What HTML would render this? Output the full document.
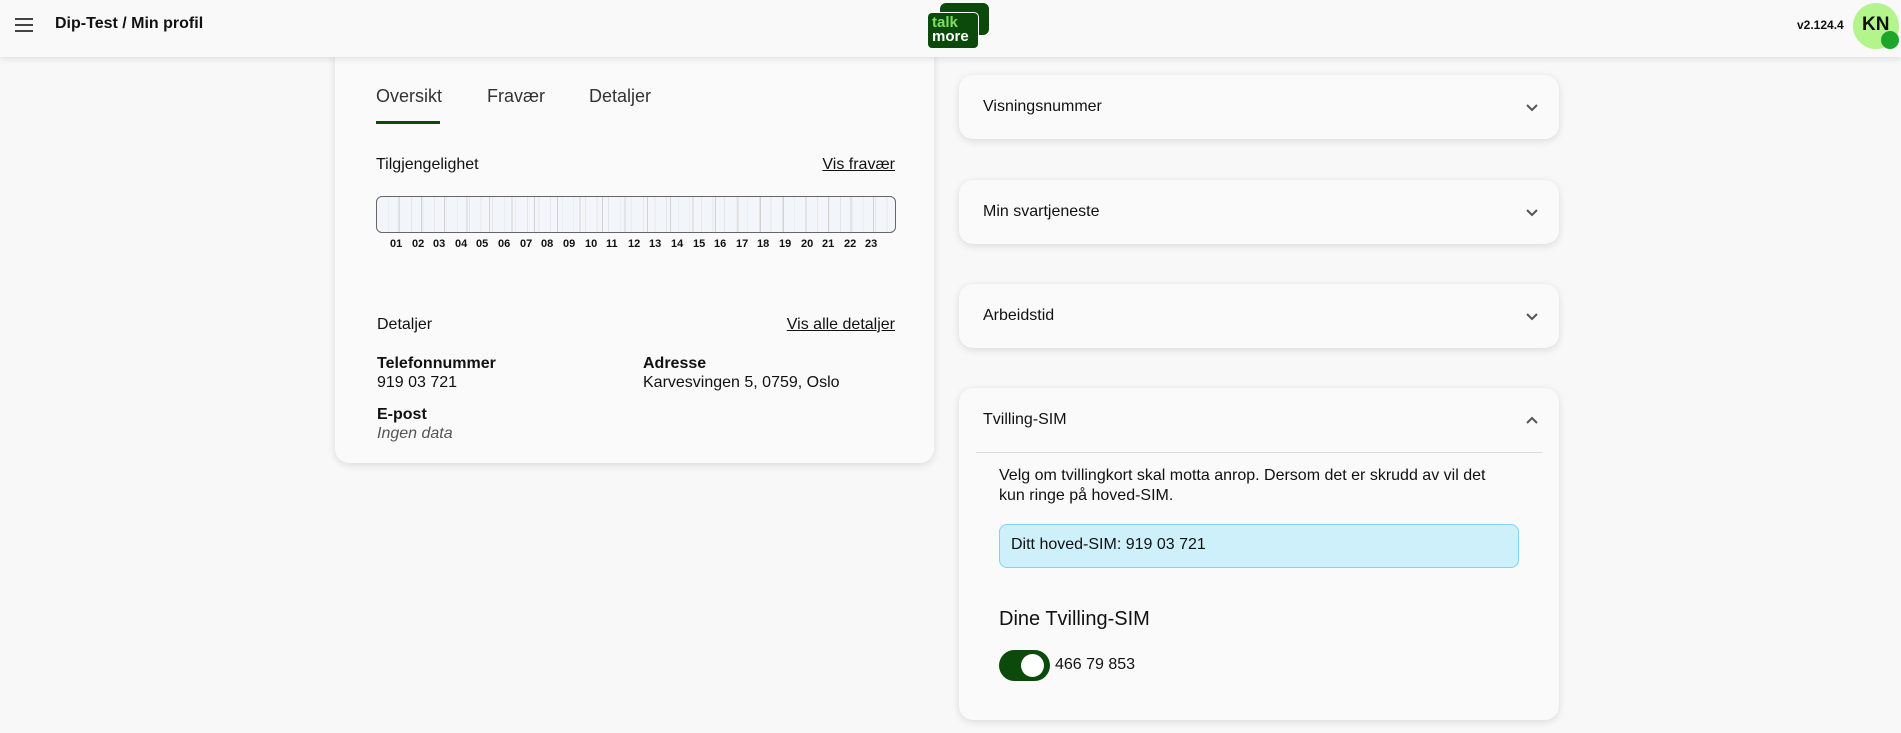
<!DOCTYPE html>
<html><head><meta charset="utf-8"><style>
*{box-sizing:border-box;margin:0;padding:0}
body{width:1901px;height:733px;background:#f8f8f8;font-family:"Liberation Sans",sans-serif;color:#111;position:relative;overflow:hidden}
.hdr{position:absolute;left:0;top:0;width:1901px;height:57px;background:#f9f9f9;box-shadow:0 2px 6px rgba(0,0,0,.1);z-index:2}
.abs{position:absolute}
.card{position:absolute;background:#fafafa;border-radius:14px;box-shadow:0 2px 8px rgba(0,0,0,.12)}
.t{font-size:16px;white-space:nowrap}
.b{font-weight:bold}
.chev{position:absolute;width:14px;height:9px}
</style></head><body>
<div class="hdr">
  <svg class="abs" style="left:14px;top:17px" width="20" height="16" viewBox="0 0 20 16"><path d="M1 2h18M1 8h18M1 14h18" stroke="#444" stroke-width="2"/></svg>
  <div class="abs t b" style="left:55px;top:15px;font-size:16px">Dip-Test / Min profil</div>
  <div class="abs" style="left:940px;top:3px;width:49px;height:32px;background:#0b4a0b;border-radius:6px"></div>
  <div class="abs" style="left:927px;top:12px;width:52px;height:37px;background:#0b4a0b;border-radius:5px;border:1px solid #f9f9f9"></div>
  <div class="abs b" style="left:932px;top:16px;font-size:15px;line-height:14px;color:#7ee05a">talk</div>
  <div class="abs b" style="left:932px;top:30px;font-size:15px;line-height:14px;color:#fff">more</div>
  <div class="abs b" style="left:1797px;top:18px;font-size:12px">v2.124.4</div>
  <div class="abs" style="left:1853px;top:3px;width:46px;height:46px;border-radius:50%;background:#b3f58c"></div>
  <div class="abs b" style="left:1862px;top:14px;font-size:19px">KN</div>
  <div class="abs" style="left:1881px;top:31px;width:18px;height:18px;border-radius:50%;background:#1ea52a"></div>
</div>

<div class="card" style="left:335px;top:40px;width:599px;height:423px;border-radius:0 0 14px 14px">
  <div class="abs" style="left:41px;top:46px;font-size:18px;color:#333">Oversikt</div>
  <div class="abs" style="left:152px;top:46px;font-size:18px;color:#333">Fravær</div>
  <div class="abs" style="left:254px;top:46px;font-size:18px;color:#333">Detaljer</div>
  <div class="abs" style="left:41px;top:81px;width:64px;height:3px;background:#0b4a0b"></div>
  <div class="abs t" style="left:41px;top:116px">Tilgjengelighet</div>
  <div class="abs t" style="right:39px;top:116px;text-decoration:underline">Vis fravær</div>
  <div class="abs" style="left:41px;top:156px;width:520px;height:37px;border:1px solid #666;border-radius:6px;background:#f2f6fa;overflow:hidden;
    background-image:repeating-linear-gradient(90deg,transparent 0 21.6px,#d2d2d2 21.6px 22.6px),repeating-linear-gradient(90deg,transparent 0 10.8px,#e6e6e6 10.8px 11.6px)"></div>
  <div class="abs b" style="left:41px;top:198px;width:520px;height:14px;font-size:11px">
    <span class="abs" style="left:14px">01</span><span class="abs" style="left:36px">02</span><span class="abs" style="left:57px">03</span><span class="abs" style="left:79px">04</span><span class="abs" style="left:100px">05</span><span class="abs" style="left:122px">06</span><span class="abs" style="left:144px">07</span><span class="abs" style="left:165px">08</span><span class="abs" style="left:187px">09</span><span class="abs" style="left:209px">10</span><span class="abs" style="left:230px">11</span><span class="abs" style="left:252px">12</span><span class="abs" style="left:273px">13</span><span class="abs" style="left:295px">14</span><span class="abs" style="left:317px">15</span><span class="abs" style="left:338px">16</span><span class="abs" style="left:360px">17</span><span class="abs" style="left:381px">18</span><span class="abs" style="left:403px">19</span><span class="abs" style="left:425px">20</span><span class="abs" style="left:446px">21</span><span class="abs" style="left:468px">22</span><span class="abs" style="left:489px">23</span>
  </div>
  <div class="abs t" style="left:42px;top:276px">Detaljer</div>
  <div class="abs t" style="right:39px;top:276px;text-decoration:underline">Vis alle detaljer</div>
  <div class="abs t b" style="left:42px;top:315px">Telefonnummer</div>
  <div class="abs t" style="left:42px;top:334px">919 03 721</div>
  <div class="abs t b" style="left:308px;top:315px">Adresse</div>
  <div class="abs t" style="left:308px;top:334px">Karvesvingen 5, 0759, Oslo</div>
  <div class="abs t b" style="left:42px;top:366px">E-post</div>
  <div class="abs t" style="left:42px;top:385px;font-style:italic;color:#555">Ingen data</div>
</div>

<div class="card" style="left:959px;top:75px;width:600px;height:64px">
  <div class="abs t" style="left:24px;top:23px">Visningsnummer</div>
  <svg class="chev" style="left:566px;top:28px" viewBox="0 0 14 9"><path d="M2 2l5 5 5-5" fill="none" stroke="#555" stroke-width="2"/></svg>
</div>
<div class="card" style="left:959px;top:180px;width:600px;height:64px">
  <div class="abs t" style="left:24px;top:23px">Min svartjeneste</div>
  <svg class="chev" style="left:566px;top:28px" viewBox="0 0 14 9"><path d="M2 2l5 5 5-5" fill="none" stroke="#555" stroke-width="2"/></svg>
</div>
<div class="card" style="left:959px;top:284px;width:600px;height:64px">
  <div class="abs t" style="left:24px;top:23px">Arbeidstid</div>
  <svg class="chev" style="left:566px;top:28px" viewBox="0 0 14 9"><path d="M2 2l5 5 5-5" fill="none" stroke="#555" stroke-width="2"/></svg>
</div>
<div class="card" style="left:959px;top:388px;width:600px;height:332px">
  <div class="abs t" style="left:24px;top:23px">Tvilling-SIM</div>
  <svg class="chev" style="left:566px;top:28px" viewBox="0 0 14 9"><path d="M2 7l5-5 5 5" fill="none" stroke="#555" stroke-width="2"/></svg>
  <div class="abs" style="left:17px;top:64px;width:566px;height:1px;background:#ddd"></div>
  <div class="abs" style="left:40px;top:78px;width:500px;font-size:16px;line-height:20px">Velg om tvillingkort skal motta anrop. Dersom det er skrudd av vil det kun ringe på hoved-SIM.</div>
  <div class="abs" style="left:40px;top:136px;width:520px;height:44px;background:#cdf0fb;border:1px solid #7fd3f3;border-radius:8px"></div>
  <div class="abs t" style="left:52px;top:148px">Ditt hoved-SIM: 919 03 721</div>
  <div class="abs" style="left:40px;top:220px;font-size:20px">Dine Tvilling-SIM</div>
  <div class="abs" style="left:40px;top:262px;width:51px;height:31px;border-radius:16px;background:#0b4a0b"></div>
  <div class="abs" style="left:62px;top:266px;width:23px;height:23px;border-radius:50%;background:#fff"></div>
  <div class="abs t" style="left:96px;top:268px">466 79 853</div>
</div>
</body></html>
